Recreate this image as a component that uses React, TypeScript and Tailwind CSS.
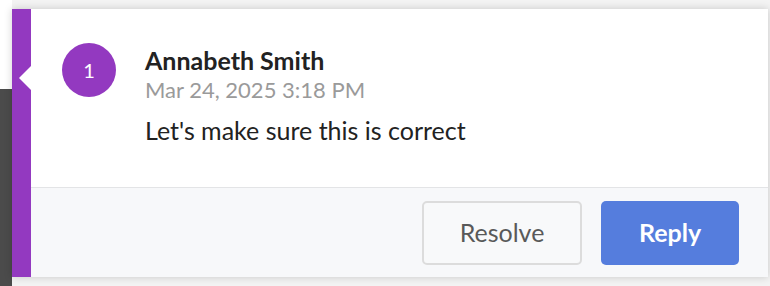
import React from "react";

export default function App() {
  return (
    <div
      className="relative flex h-[286px] w-[770px] overflow-hidden bg-[#f3f3f3]"
      style={{ fontFamily: "Lato, 'Open Sans', sans-serif" }}
    >
      {/* page behind the card */}
      <div className="flex w-[12px] shrink-0 flex-col">
        <div className="h-[89px] bg-white" />
        <div className="flex-1 bg-[#4b4b4b]" />
      </div>

      {/* comment card */}
      <div className="mt-[9px] mr-[2px] flex h-[268px] flex-1 bg-white shadow-[0_0_8px_rgba(0,0,0,0.18)]">
        <div className="relative w-[19px] shrink-0 bg-[#9339c0]">
          <div className="absolute top-[57px] right-0 h-0 w-0 border-y-[12px] border-r-[12px] border-y-transparent border-r-white" />
        </div>

        <div className="flex flex-1 flex-col">
          <div className="flex flex-1 items-start pl-[31px] pt-[34px]">
            <div className="flex h-[54px] w-[54px] shrink-0 items-center justify-center rounded-full bg-[#9339c0] text-[20px] text-white">
              1
            </div>
            <div className="mt-[2px] ml-[29px] flex flex-col">
              <div className="text-[25px] leading-[30px] font-bold text-[#222]">Annabeth Smith</div>
              <div className="mt-[2px] text-[22px] leading-[26px] text-[#9a9a9a]">Mar 24, 2025 3:18 PM</div>
              <div className="mt-[12px] text-[25px] leading-[30px] text-[#222]">Let's make sure this is correct</div>
            </div>
          </div>

          <div className="flex h-[90px] items-start justify-end gap-[19px] border-t border-[#e3e4e6] bg-[#f7f8fa] pt-[13px] pr-[29px]">
            <button className="h-[64px] w-[160px] rounded-[5px] border-2 border-[#dcdcdc] bg-[#f8f9fa] text-[25px] text-[#595959]">
              Resolve
            </button>
            <button className="h-[64px] w-[138px] rounded-[5px] bg-[#557ddd] text-[25px] font-bold text-white">
              Reply
            </button>
          </div>
        </div>
      </div>
    </div>
  );
}
